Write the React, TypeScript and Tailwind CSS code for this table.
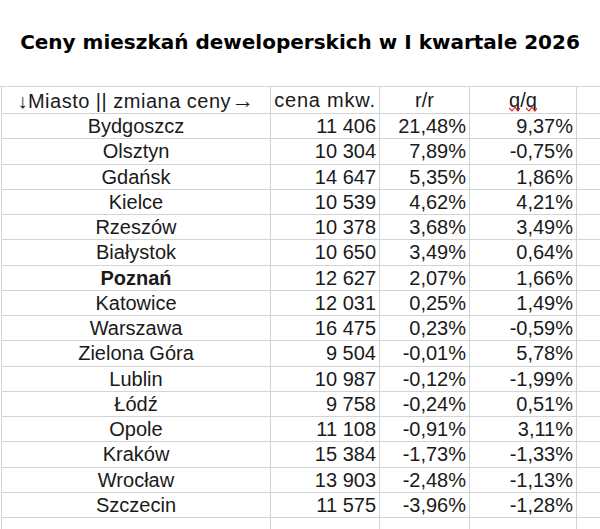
const rows: [string, string, string, string, boolean?][] = [
  ["Bydgoszcz", "11 406", "21,48%", "9,37%"],
  ["Olsztyn", "10 304", "7,89%", "-0,75%"],
  ["Gdańsk", "14 647", "5,35%", "1,86%"],
  ["Kielce", "10 539", "4,62%", "4,21%"],
  ["Rzeszów", "10 378", "3,68%", "3,49%"],
  ["Białystok", "10 650", "3,49%", "0,64%"],
  ["Poznań", "12 627", "2,07%", "1,66%", true],
  ["Katowice", "12 031", "0,25%", "1,49%"],
  ["Warszawa", "16 475", "0,23%", "-0,59%"],
  ["Zielona Góra", "9 504", "-0,01%", "5,78%"],
  ["Lublin", "10 987", "-0,12%", "-1,99%"],
  ["Łódź", "9 758", "-0,24%", "0,51%"],
  ["Opole", "11 108", "-0,91%", "3,11%"],
  ["Kraków", "15 384", "-1,73%", "-1,33%"],
  ["Wrocław", "13 903", "-2,48%", "-1,13%"],
  ["Szczecin", "11 575", "-3,96%", "-1,28%"],
];

const cell = "border-l border-b border-[#d4d4d4] flex items-center overflow-hidden whitespace-nowrap";
const grid = "grid grid-cols-[269px_109px_90px_107px_1fr] ml-px";

// red spell-check mark under a letter
function Squiggle({ ch }: { ch: string }) {
  return (
    <span className="relative inline-block">
      {ch}
      <svg className="absolute left-0 bottom-[-2px]" width="11" height="6" viewBox="0 0 11 6">
        <path d="M0 2 L3 5 L6 1 L9 5 L11 2" fill="none" stroke="#e02020" strokeWidth="1.1" />
      </svg>
    </span>
  );
}

export default function App() {
  return (
    <div className="w-[600px] h-[529px] overflow-hidden bg-white text-[#1a1a1a]">
      <div className="h-[86px] flex items-center justify-center pb-[2px]">
        <h1 className="text-[20px] font-bold text-black font-['DejaVu_Sans',sans-serif]">
          Ceny mieszkań deweloperskich w I kwartale 2026
        </h1>
      </div>
      <div className="border-t border-[#d4d4d4] font-['Liberation_Sans',Arial,sans-serif] text-[20px] leading-none">
        <div className={`${grid} h-[27px]`}>
          <div className={`${cell} justify-center`}>
            <span className="tracking-[0.5px]">
              ↓Miasto || zmiana ceny<span className="text-[23px]">→</span>
            </span>
          </div>
          <div className={`${cell} justify-center tracking-[0.8px]`}>cena mkw.</div>
          <div className={`${cell} justify-center`}>r/r</div>
          <div className={`${cell} justify-center`}>
            <Squiggle ch="q" />/<Squiggle ch="q" />
          </div>
          <div className={cell}></div>
        </div>
        {rows.map(([city, price, yy, qq, bold]) => (
          <div key={city} className={`${grid} h-[25.25px]`}>
            <div className={`${cell} justify-center ${bold ? "font-bold" : ""}`}>{city}</div>
            <div className={`${cell} justify-end pr-[3px]`}>{price}</div>
            <div className={`${cell} justify-end pr-[3px]`}>{yy}</div>
            <div className={`${cell} justify-end pr-[3px]`}>{qq}</div>
            <div className={cell}></div>
          </div>
        ))}
        <div className={`${grid} h-[25px]`}>
          <div className={cell}></div>
          <div className={cell}></div>
          <div className={cell}></div>
          <div className={cell}></div>
          <div className={cell}></div>
        </div>
      </div>
    </div>
  );
}
